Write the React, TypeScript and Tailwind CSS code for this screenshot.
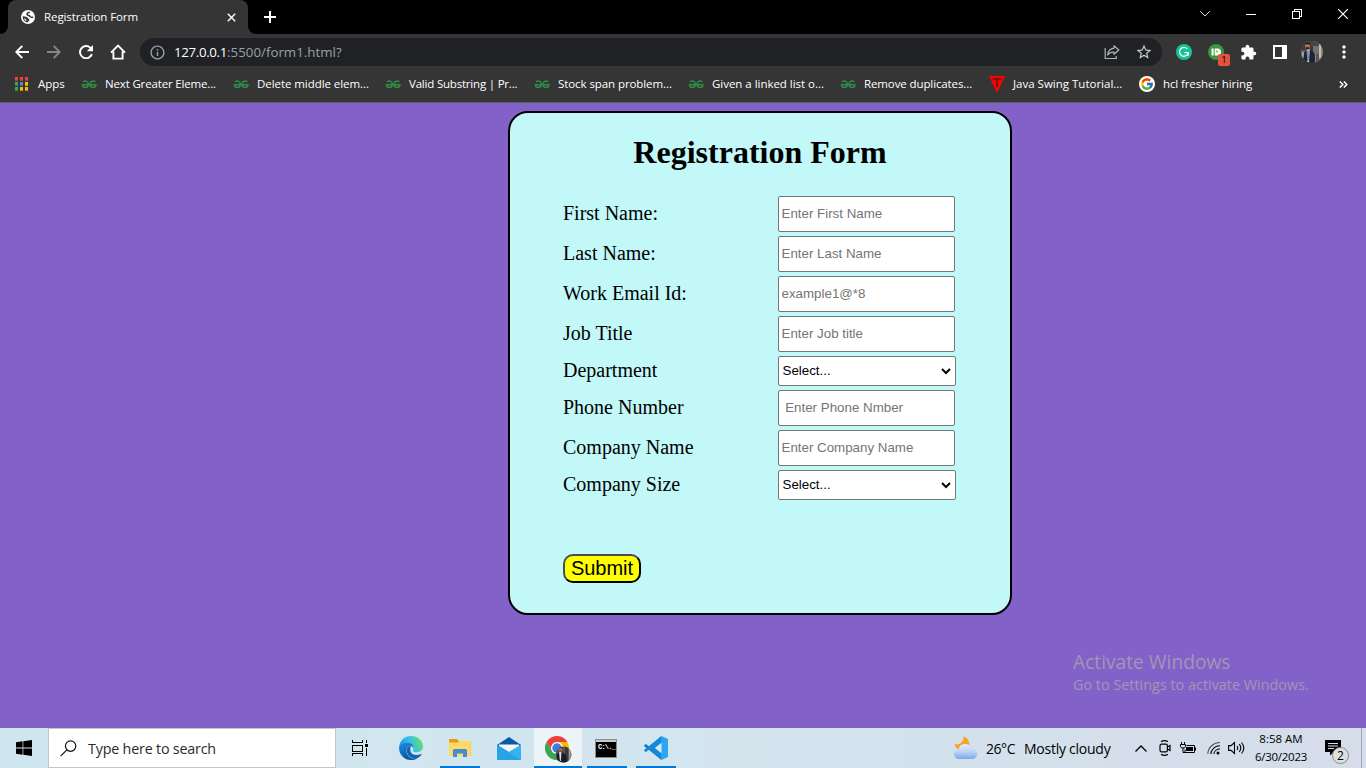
import type { ReactNode } from "react";
import { MdExtension, MdInfoOutline, MdMoreVert, MdStarBorder } from "react-icons/md";
import { FcGoogle } from "react-icons/fc";

/* ---------- Browser icons ---------- */

function GlobeIcon() {
  return (
    <svg width="14" height="14" viewBox="0 0 14 14">
      <circle cx="7" cy="7" r="7" fill="#fff" />
      <path d="M8.800 2.300C6.800 2.600 5.600 3.600 6.300 4.700 7 5.700 8.500 5.300 9 6.500c.5 1 1.900.8 3.200.7" fill="none" stroke="#353535" strokeWidth="1.600" />
      <path d="M1.800 6.300C3.500 6.400 6.800 6.700 7 8.600c1.300.3 1.700 1 1.200 2-.5.900-1.300 1-1.500 1.900C3.600 12.200 1.500 9.500 1.800 6.300zM3 8.300c.3 1.500 1.300 2.600 2.400 3 .2-1.500-.6-1.300-.7-2.300z" fill="#353535" fillRule="evenodd" />
    </svg>
  );
}

function BackIcon() {
  return (
    <svg width="14" height="14" viewBox="0 0 14 14" fill="none" stroke="#fff" strokeWidth="1.900">
      <path d="M14 7H1.500M7.300.8 1.300 7l6 6.200" />
    </svg>
  );
}

function ForwardIcon() {
  return (
    <svg width="14" height="14" viewBox="0 0 14 14" fill="none" stroke="#868686" strokeWidth="1.800">
      <path d="M0 7h12.500M6.700.8l6 6.200-6 6.200" />
    </svg>
  );
}

function ReloadIcon() {
  return (
    <svg width="14" height="14" viewBox="0 0 14 14">
      <path d="M12.900 9.200A6.100 6.100 0 1 1 11.300 2.700L12 3.500" fill="none" stroke="#fff" strokeWidth="2" />
      <path d="M14 0v6.200H7.800z" fill="#fff" />
    </svg>
  );
}

function HomeIcon() {
  return (
    <svg width="16" height="16" viewBox="0 0 16 16" fill="none" stroke="#fff" strokeWidth="1.900">
      <path d="M1 8.600 8 1.500l7 7.100M3.400 7.500V14.600h9.200V7.500" />
    </svg>
  );
}

function AppsIcon() {
  const colors = ["#ea4335", "#ea4335", "#ea4335", "#34a853", "#4285f4", "#fbbc05", "#34a853", "#fbbc05", "#fbbc05"];
  return (
    <svg width="16" height="14" viewBox="-1 0 16 14" shapeRendering="crispEdges">
      {colors.map((c, i) => (
        <g key={i}>
          <rect x={(i % 3) * 5} y={Math.floor(i / 3) * 5} width="3" height="3" fill={c} />
          <rect x={(i % 3) * 5} y={Math.floor(i / 3) * 5 + 3} width="3" height="1" fill={c} opacity="0.700" />
        </g>
      ))}
    </svg>
  );
}

function GfgIcon() {
  return (
    <svg width="16" height="9" viewBox="-.7 0 16 9" fill="none" stroke="#2f8d46" strokeWidth="1.500">
      <path d="M1.300 1.700C4.500.2 6.600 1.500 6.600 4.500 6.600 8.600.9 8.600.8 4.800H14.200C14.100 8.600 8.400 8.600 8.400 4.500 8.400 1.500 10.500.2 13.700 1.700" />
    </svg>
  );
}

function TIcon() {
  return (
    <svg width="16" height="16" viewBox="0 0 16 16">
      <path d="M0 0h16L8.500 16h-1z" fill="#f00" />
      <path d="M4 3h8M8 3v8" stroke="#4c1a17" strokeWidth="1.600" fill="none" />
    </svg>
  );
}

function GoogleDisc() {
  return (
    <span className="flex size-4 items-center justify-center rounded-full bg-white">
      <FcGoogle size={14} />
    </span>
  );
}

function ShareIcon() {
  return (
    <svg width="16" height="16" viewBox="0 0 16 16" fill="none" stroke="#b4b5b7" strokeWidth="1.200">
      <path d="M1.200 4v10.500h11V12" />
      <path d="M10 1.800 14.800 6 10 10.300V8C7.200 8 5.200 8.800 3.600 11 4 7.500 6.200 4.600 10 4.100z" strokeLinejoin="round" />
    </svg>
  );
}

function GrammarlyIcon() {
  return (
    <svg width="16" height="16" viewBox="0 0 16 16">
      <circle cx="8" cy="8" r="8" fill="#15c39a" />
      <path d="M11.200 4.900A4.400 4.400 0 1 0 12.100 9.300M8.500 8.700h3.700v3" fill="none" stroke="#fff" strokeWidth="1.300" />
    </svg>
  );
}

function PushbulletIcon() {
  return (
    <span className="relative block h-4 w-[22px]">
      <svg width="16" height="16" viewBox="0 0 16 16">
        <circle cx="8" cy="8" r="8" fill="#3a963c" />
        <rect x="3.500" y="4.500" width="2.200" height="7" rx=".5" fill="#fff" />
        <path d="M6.700 4.500H9.500a3.500 3.500 0 0 1 0 7H6.700z" fill="#fff" />
        <path d="M8.700 6.400v1.600h1.500" stroke="#3a963c" strokeWidth=".8" fill="none" />
      </svg>
      <span className="absolute top-[10px] left-[10px] flex h-3 w-3 items-center justify-center rounded-[2px] bg-[#e8503f] font-['Open_Sans',sans-serif] text-[9.500px] leading-none text-black">
        1
      </span>
    </span>
  );
}

function SidePanelIcon() {
  return (
    <svg width="14" height="14" viewBox="0 0 14 14" shapeRendering="crispEdges">
      <path d="M0 0h14v14H0zM2 2v10h7V2z" fill="#fff" fillRule="evenodd" />
    </svg>
  );
}

function Avatar() {
  return (
    <svg width="22" height="22" viewBox="0 0 22 22">
      <defs>
        <clipPath id="avatar-disc">
          <circle cx="11" cy="11" r="11" />
        </clipPath>
      </defs>
      <g clipPath="url(#avatar-disc)">
        <rect width="22" height="22" fill="#8a8481" />
        <rect width="12" height="10" fill="#3f3836" />
        <rect y="9" width="5" height="13" fill="#6b615f" />
        <rect x="1" y="11" width="2" height="6" fill="#a99f9a" />
        <rect x="10" width="8" height="5" fill="#4b4644" />
        <rect x="12" y="5" width="6" height="8" fill="#77716e" />
        <rect x="18" y="3" width="2" height="14" fill="#c2bcb8" />
        <rect x="15" y="13" width="3" height="9" fill="#5a5553" />
        <path d="M1.500 22 3.500 11 5.500 8.500h3L11.500 10l2.300 3 .2 9z" fill="#1d2436" />
        <path d="M5.500 8h3.200L8 21H6.500z" fill="#dfe3ec" />
        <path d="M7 9.500v10" stroke="#2c3a62" />
        <ellipse cx="6.500" cy="5" rx="2.600" ry="3.500" fill="#a97257" />
        <path d="M3.500 4.500c0-4 6-4 6 0L8.500 3.200h-4z" fill="#16110f" />
        <path d="M4.500 6.200h4L7.500 8.500h-2z" fill="#32211a" />
      </g>
    </svg>
  );
}

/* ---------- Taskbar icons ---------- */

function WindowsIcon() {
  return (
    <svg width="16" height="16" viewBox="0 0 16 16">
      <path d="M0 2.200 6.600 1.300V7.600H0zM7.300 1.200 16 0v7.600H7.300zM0 8.400h6.600v6.300L0 13.800zM7.300 8.400H16V16l-8.700-1.200z" />
    </svg>
  );
}

function SearchIcon() {
  return (
    <svg width="17" height="17" viewBox="0 0 17 17" fill="none" stroke="#111" strokeWidth="1.200">
      <circle cx="10.600" cy="6.100" r="5.200" />
      <path d="M6.900 9.900.6 16.200" />
    </svg>
  );
}

function TaskViewIcon() {
  return (
    <svg width="17" height="16" viewBox="0 0 17 16" fill="none" stroke="#000" shapeRendering="crispEdges">
      <path d="M.5 0v2.500h10V0M.5 5.500h10v6H.5zM.5 16v-2.500h10V16M14.500 0v3M14.500 8v8" />
      <rect x="13" y="4" width="3" height="3" fill="#000" stroke="none" />
    </svg>
  );
}

function EdgeIcon() {
  return (
    <svg width="24" height="24" viewBox="0 0 24 24">
      <defs>
        <linearGradient id="edge-top" x1="0" y1="0.600" x2="1" y2="0.300">
          <stop offset="0" stopColor="#1f8fe0" />
          <stop offset="0.500" stopColor="#35c1e6" />
          <stop offset="1" stopColor="#6be45a" />
        </linearGradient>
        <linearGradient id="edge-side" x1="0" y1="0" x2="0.400" y2="1">
          <stop offset="0" stopColor="#1c8ede" />
          <stop offset="1" stopColor="#0b54a4" />
        </linearGradient>
      </defs>
      <path d="M.1 11C.8 4.500 5.800 0 12 0c7 0 12 5 12 10.300 0 3.700-2.800 6-6 6-2.600 0-4.300-1-4.300-1.900 0-.6 1-1 1-2.700C14.700 9 12 6.500 8.300 6.500 4 6.500.8 9 .1 11z" fill="url(#edge-top)" />
      <path d="M.1 11C.9 8.500 4 6.500 8.300 6.500c3.700 0 6.400 2.500 6.400 5.200 0 .2 0 .5-.1.700C13.800 10.600 12 10 11 10c-2 0-3.500 2.500-3.500 5 0 5 5 9 10.500 7.500C16.200 23.500 14.200 24 12 24 5 24-.4 18 .1 11z" fill="url(#edge-side)" />
      <path d="M7.800 13.500C7 18 11 22.900 16.500 22.900c2.500-.4 4.700-2.500 5.900-4.200.4-.6 0-1-.5-.7-4 2.100-9.200.8-10.400-2.600C10.800 13.300 12 11 11.500 10c-2 0-3.300 1.700-3.700 3.500z" fill="#1262b5" />
    </svg>
  );
}

function ExplorerIcon() {
  return (
    <svg width="22" height="20" viewBox="0 0 22 20">
      <path d="M0 1.500Q0 1 .6 1H8l1.800 2H21q.8 0 .8.800V18H0z" fill="#e0a010" />
      <path d="M0 4.500h9L10.500 3H21q.8 0 .8.800V18H0z" fill="#ffd766" />
      <path d="M4 19v-6.500Q4 11 5.500 11h11q1.500 0 1.500 1.500V19h-4v-3.500H8V19z" fill="#3e8ed6" />
    </svg>
  );
}

function MailIcon() {
  return (
    <svg width="24" height="23" viewBox="0 0 24 23">
      <path d="M0 8 12 0l12 8v4H0z" fill="#0b5aa8" />
      <path d="M2 7.500h20V15H2z" fill="#f4f6f8" />
      <path d="M0 7.800 12 15 0 23z" fill="#2196e0" />
      <path d="M24 7.800V23L11.500 15.300z" fill="#35b3ee" />
      <path d="M0 23 24 7.800V23z" fill="#35b3ee" />
      <path d="M0 7.800 24 23H0z" fill="#2aa3e6" />
    </svg>
  );
}

function ChromeIcon() {
  return (
    <svg width="27" height="27" viewBox="0 0 27 27">
      <defs>
        <clipPath id="profile-disc">
          <circle cx="18.500" cy="18.500" r="8" />
        </clipPath>
      </defs>
      <path d="M12 12V6h10.400A12 12 0 0 1 12 24z" fill="#fbbc04" />
      <path d="M12 12l5.200 3L12 24A12 12 0 0 1 1.600 6l5.200 9z" fill="#34a853" />
      <path d="M12 6h10.400A12 12 0 0 0 1.600 6l5.200 9z" fill="#ea4335" />
      <circle cx="12" cy="12" r="6" fill="#fff" />
      <circle cx="12" cy="12" r="4.700" fill="#3b7de9" />
      <g clipPath="url(#profile-disc)">
        <rect x="10" y="10" width="17" height="17" fill="#5a5654" />
        <rect x="20" y="10" width="3" height="17" fill="#3c3837" />
        <rect x="24" y="12" width="1.500" height="12" fill="#aaa4a0" />
        <path d="M11.500 27 12 18l2-2h3l4 3 1 8z" fill="#171c2a" />
        <path d="M14 16h2.500l-.6 9h-1z" fill="#d5d9e2" />
        <ellipse cx="15.300" cy="13" rx="1.900" ry="2.600" fill="#9a6a53" />
        <path d="M13 12.500c0-3 4.600-3 4.600 0l-1-1h-2.800z" fill="#16110f" />
      </g>
    </svg>
  );
}

function TerminalIcon() {
  return (
    <span className="mr-[2px] flex h-[19px] w-[22px] flex-col border border-[#8b8b8b] bg-black">
      <span className="h-[2px] bg-[#c9c9c9]" />
      <span className="pt-[2px] pl-[2px] font-['Liberation_Mono',monospace] text-[7px] leading-none font-bold tracking-[-0.800px] text-white">
        C:\._
      </span>
    </span>
  );
}

function VsCodeIcon() {
  return (
    <svg width="24" height="24" viewBox="0 0 24 24">
      <path d="M17.500 0 5.500 11 2.300 8.200Q1.800 7.900 1.300 8.200L.3 9.200q-.5.5 0 1L17.500 24z" fill="#0f7dc8" />
      <path d="M17.500 24 5.500 13 2.300 15.800q-.5.3-1 0L.3 14.800q-.5-.5 0-1L17.500 0v7L11 12l6.500 5z" fill="#1689d6" />
      <path d="M17.300 0 24 3v18l-6.700 3z" fill="#2ba5f2" />
      <path d="M17.500 6.800V17.200L10.800 12z" fill="#d6e9ef" />
    </svg>
  );
}

function WeatherIcon() {
  return (
    <svg width="25" height="24" viewBox="0 0 25 24">
      <defs>
        <linearGradient id="cloud" x1="0" y1="0" x2="0" y2="1">
          <stop offset="0" stopColor="#e4eefc" />
          <stop offset="0.500" stopColor="#bcd4f8" />
          <stop offset="1" stopColor="#7ca8ea" />
        </linearGradient>
      </defs>
      <path d="M9.500 0c4.500 2 7 6 5 11L6 14C3.500 13.500 1 11 .5 8 5 9.500 10.500 6 9.500 0z" fill="#f5a623" />
      <path d="M5 23A4.800 4.800 0 0 1 4.500 13.400 6.500 6.500 0 0 1 17 12.200 5.500 5.500 0 0 1 19 23z" fill="url(#cloud)" />
    </svg>
  );
}

function MeetNowIcon() {
  return (
    <svg width="12" height="16" viewBox="0 0 12 16" fill="none" stroke="#000" strokeWidth="1.200">
      <path d="M2 1.800Q5.500-.4 9 1.800M2 14.200Q5.500 16.400 9 14.200" />
      <rect x="1" y="4.200" width="7.400" height="7.600" rx="1.600" />
      <path d="M8.400 7l2.600-1.500v5L8.400 9" />
    </svg>
  );
}

function BatteryIcon() {
  return (
    <svg width="17" height="12" viewBox="0 0 17 12" fill="none" stroke="#000">
      <path d="M1.500 0v2M4.500 0v2M.5 2.500h5v2q0 1.500-2.500 1.500t-2.500-1.500zM3 6v4.500h2" />
      <path d="M6.500 3.500h8v7H5V7.500" />
      <path d="M6 5h7v4H6z" fill="#000" stroke="none" />
      <path d="M15.500 5.500v3" />
    </svg>
  );
}

function WifiIcon() {
  return (
    <svg width="14" height="14" viewBox="0 0 14 14" fill="none" stroke="#000" strokeWidth="1.100">
      <path d="M.8 13A12 12 0 0 1 13 1.500" stroke="#555" />
      <path d="M3.800 13A9 9 0 0 1 13 4.800M6.800 13A6 6 0 0 1 13 8" />
      <circle cx="11" cy="12" r="1.500" fill="#000" stroke="none" />
    </svg>
  );
}

function VolumeIcon() {
  return (
    <svg width="17" height="14" viewBox="0 0 17 14" fill="none" stroke="#000" strokeWidth="1.100">
      <path d="M.6 4.600H3L6.500 1.500v11L3 9.400H.6z" />
      <path d="M9 5q1.500 2 0 4M11.300 3.200q3 3.800 0 7.600M13.600 1.500q4.400 5.500 0 11" />
    </svg>
  );
}

function NotificationIcon() {
  return (
    <span className="relative block h-[24px] w-[24px]">
      <svg width="16" height="16" viewBox="0 0 16 16">
        <path d="M0 0h16v12H9l-4 3.500V12H0z" />
        <path d="M3 3.500h10M3 6h10M3 8.500h6" stroke="#d5dfeb" />
      </svg>
      <span className="absolute top-[7px] left-[7px] flex size-[17px] items-center justify-center rounded-full border border-[#8a8a8a] bg-[#dedfe1] text-[12px] leading-none text-black">
        2
      </span>
    </span>
  );
}

/* ---------- Browser chrome ---------- */

function TabStrip() {
  return (
    <header className="flex h-[34px] items-stretch bg-black">
      <div className="flex w-2 items-end bg-[#353535]">
        <div className="h-full w-full rounded-br-lg bg-black" />
      </div>
      <div className="flex w-60 items-center rounded-t-lg bg-[#353535] pl-[13px] text-white">
        <GlobeIcon />
        <span className="ml-[9px] flex-1 text-[11.5px] tracking-[-0.09px]">Registration Form</span>
        <svg width="9" height="9" viewBox="0 0 9 9" className="mr-[12px]" stroke="#fff" strokeWidth="1.400">
          <path d="M.8.8l7.400 7.400M8.200.8.8 8.200" />
        </svg>
      </div>
      <div className="flex w-2 items-end bg-[#353535]">
        <div className="h-full w-full rounded-bl-lg bg-black" />
      </div>
      <div className="flex flex-1 items-center bg-black pl-2">
        <svg width="12" height="12" viewBox="0 0 12 12" stroke="#fff" strokeWidth="2" shapeRendering="crispEdges">
          <path d="M6 0v12M0 6h12" />
        </svg>
      </div>
      <div className="flex h-7 items-center bg-black pr-[18px]">
        <svg width="10" height="6" viewBox="0 0 10 6" fill="none" stroke="#ddd" className="mr-[36px]">
          <path d="M.3.3 5 5 9.700.3" />
        </svg>
        <span className="mt-px mr-[36px] h-px w-[10px] bg-white" />
        <svg width="10" height="10" viewBox="0 0 10 10" fill="none" stroke="#fff" className="mr-[36px]" shapeRendering="crispEdges">
          <path d="M.5 2.500h7v7h-7zM2.500 2.500v-2h7v7h-2" />
        </svg>
        <svg width="10" height="10" viewBox="0 0 10 10" stroke="#fff" strokeWidth="1.200">
          <path d="M0 0l10 10M10 0 0 10" />
        </svg>
      </div>
    </header>
  );
}

function Toolbar() {
  return (
    <div className="flex h-9 items-center text-white">
      <div className="flex items-center gap-[18px] pl-[15px]">
        <BackIcon />
        <ForwardIcon />
        <ReloadIcon />
      </div>
      <span className="ml-[17px]"><HomeIcon /></span>
      <div className="ml-[14px] flex h-7 w-[1022px] items-center rounded-full bg-[#202124]">
        <MdInfoOutline size={17} className="ml-[9px] text-[#9aa0a6]" />
        <span className="mt-px ml-[8px] w-[53px] text-[13.3px] tracking-[-0.35px] whitespace-nowrap">127.0.0.1</span>
        <span className="mt-px flex-1 text-[13.3px] tracking-[0.02px] text-[#9aa0a6]">:5500/form1.html?</span>
        <ShareIcon />
        <MdStarBorder size={18} className="mr-[9px] ml-[15px] text-[#c8c9cb]" />
      </div>
      <span className="ml-[14px]"><GrammarlyIcon /></span>
      <span className="ml-4"><PushbulletIcon /></span>
      <MdExtension size={17} className="ml-[10px]" />
      <span className="ml-[16px]"><SidePanelIcon /></span>
      <span className="ml-[14px]"><Avatar /></span>
      <MdMoreVert size={20} className="ml-[11px]" />
    </div>
  );
}

const gfg = <GfgIcon />;

const bookmarks: { label: string; icon: ReactNode; box: string; text: string }[] = [
  { label: "Apps", icon: <AppsIcon />, box: "w-[67px]", text: "tracking-normal" },
  { label: "Next Greater Eleme...", icon: gfg, box: "w-[152px]", text: "tracking-[-0.16px]" },
  { label: "Delete middle elem...", icon: gfg, box: "w-[152px]", text: "tracking-[-0.06px]" },
  { label: "Valid Substring | Pr...", icon: gfg, box: "w-[149px]", text: "tracking-[-0.2px]" },
  { label: "Stock span problem...", icon: gfg, box: "w-[154px]", text: "tracking-[-0.08px]" },
  { label: "Given a linked list o...", icon: gfg, box: "w-[152px]", text: "tracking-[-0.03px]" },
  { label: "Remove duplicates...", icon: gfg, box: "w-[149px]", text: "tracking-[-0.11px]" },
  { label: "Java Swing Tutorial...", icon: <TIcon />, box: "w-[150px]", text: "tracking-normal" },
  { label: "hcl fresher hiring", icon: <GoogleDisc />, box: "w-[130px]", text: "tracking-[-0.11px]" },
];

function BookmarksBar() {
  return (
    <nav className="flex h-[33px] items-center border-b border-[#5f6063] pb-[4px] pl-[14px] text-[11.5px] text-white">
      {bookmarks.map((b) => (
        <div key={b.label} className={`flex shrink-0 items-center gap-2 whitespace-nowrap ${b.box}`}>
          <span className="flex w-4 justify-center">{b.icon}</span>
          <span className={b.text}>{b.label}</span>
        </div>
      ))}
      <svg width="9" height="7" viewBox="0 0 9 7" fill="none" stroke="#fff" strokeWidth="1.500" className="mr-[18px] ml-auto">
        <path d="M.8.5l3 3-3 3M4.800.5l3 3-3 3" />
      </svg>
    </nav>
  );
}

/* ---------- Registration form ---------- */

type Field = { label: string; placeholder?: string };

const fields: Field[] = [
  { label: "First Name:", placeholder: "Enter First Name" },
  { label: "Last Name:", placeholder: "Enter Last Name" },
  { label: "Work Email Id:", placeholder: "example1@*8" },
  { label: "Job Title", placeholder: "Enter Job title" },
  { label: "Department" },
  { label: "Phone Number", placeholder: " Enter Phone Nmber" },
  { label: "Company Name", placeholder: "Enter Company Name" },
  { label: "Company Size" },
];

function SelectBox() {
  return (
    <div className="relative h-[30px] w-[178px]">
      <select className="h-full w-full appearance-none rounded-[2px] border border-[#767676] bg-white pb-px pl-[3.500px] text-[13.333px] text-black">
        <option>Select...</option>
      </select>
      <svg width="10" height="7" viewBox="0 0 10 7" fill="none" stroke="#000" strokeWidth="2" className="absolute top-3 right-[5px]">
        <path d="M1 1l4 4 4-4" />
      </svg>
    </div>
  );
}

function RegistrationForm() {
  return (
    <form className="h-[504px] w-[504px] rounded-[20px] border-2 border-black bg-[#c3f8f8] pt-[21px] pl-[53px] font-['Liberation_Serif',serif] text-black">
      <h1 className="mr-[51px] ml-[-2px] text-center text-[32px] leading-[37px] font-bold">Registration Form</h1>
      <div className="mt-[25px] flex flex-col gap-1">
        {fields.map((f) => (
          <label key={f.label} className="flex items-center">
            <span className="w-[215px] pb-[2px] text-[20px] leading-[23px]">{f.label}</span>
            <span className="block font-['Liberation_Sans',sans-serif]">
              {f.placeholder ? (
                <input
                  type="text"
                  placeholder={f.placeholder}
                  className="block h-9 w-[177px] rounded-[2px] border border-[#767676] bg-white px-[2.500px] pb-px text-[13.333px] placeholder:text-[#757575]"
                />
              ) : (
                <SelectBox />
              )}
            </span>
          </label>
        ))}
      </div>
      <button
        type="button"
        className="mt-[54px] block h-[29px] w-[78px] rounded-[10px] border-2 border-t-[#4c4c4c] border-r-black border-b-black border-l-[#4c4c4c] bg-[#ff0] pb-px font-['Liberation_Sans',sans-serif] text-[20px] leading-[23px]"
      >
        Submit
      </button>
    </form>
  );
}

/* ---------- Taskbar ---------- */

function TaskButton({ children, bar, active }: { children: ReactNode; bar: string; active?: boolean }) {
  return (
    <div className={`flex h-10 w-12 flex-col items-center pt-[2px] ${active ? "bg-[#ecf4f8]" : ""}`}>
      <div className="flex flex-1 items-center">{children}</div>
      <div className={`h-[2px] ${bar}`} />
    </div>
  );
}

function Taskbar() {
  return (
    <footer className="flex h-10 items-center bg-linear-to-r from-[#cee7ef] via-[#d3e5ee] to-[#d5dcea] text-black">
      <div className="flex w-12 justify-center">
        <WindowsIcon />
      </div>
      <div className="flex h-10 w-72 items-center border border-[#c4c4c4] bg-white pl-[11px]">
        <SearchIcon />
        <span className="mt-px ml-[11px] text-[14.300px] tracking-[-0.19px] text-[#2b2b2b]">Type here to search</span>
      </div>
      <div className="flex w-12 justify-center">
        <TaskViewIcon />
      </div>
      <div className="ml-[3px] flex gap-px">
        <TaskButton bar="w-0"><EdgeIcon /></TaskButton>
        <TaskButton bar="w-10 bg-[#0078d7]"><ExplorerIcon /></TaskButton>
        <TaskButton bar="w-0"><MailIcon /></TaskButton>
        <TaskButton bar="w-12 bg-[#0078d7]" active><span className="ml-px pt-[2px]"><ChromeIcon /></span></TaskButton>
        <TaskButton bar="w-10 bg-[#0078d7]"><TerminalIcon /></TaskButton>
        <TaskButton bar="w-10 bg-[#0078d7]"><VsCodeIcon /></TaskButton>
      </div>
      <div className="ml-auto flex h-10 items-center">
        <WeatherIcon />
        <span className="ml-[7px] w-[38px] text-[14px] tracking-[-0.450px]">26°C</span>
        <span className="w-[111px] text-[14px] tracking-[-0.250px]">Mostly cloudy</span>
        <svg width="12" height="7" viewBox="0 0 12 7" fill="none" stroke="#000" strokeWidth="1.300">
          <path d="M.5 6.500 6 1l5.500 5.500" />
        </svg>
        <span className="ml-[12px]"><MeetNowIcon /></span>
        <span className="ml-[9px]"><BatteryIcon /></span>
        <span className="ml-[10px]"><WifiIcon /></span>
        <span className="ml-[7px]"><VolumeIcon /></span>
        <div className="mb-px ml-[9px] flex w-[54px] flex-col items-center text-[11.5px] leading-[18px] whitespace-nowrap">
          <span>8:58 AM</span>
          <span className="tracking-[-0.270px]">6/30/2023</span>
        </div>
        <span className="mt-2 ml-[17px]"><NotificationIcon /></span>
        <span className="ml-[12px] h-10 w-[5px] border-l border-[#9fa8b3]" />
      </div>
    </footer>
  );
}

export default function App() {
  return (
    <div className="flex h-[768px] w-[1366px] flex-col overflow-hidden bg-[#353535] font-['Open_Sans',sans-serif]">
      <TabStrip />
      <Toolbar />
      <BookmarksBar />
      <main className="relative flex flex-1 justify-center bg-[#8262c8] pt-2 pl-[154px]">
        <RegistrationForm />
        <div className="absolute right-[57px] bottom-[33px] w-[236px] whitespace-nowrap text-[#a196b4]">
          <div className="text-[19.200px] leading-[24px]">Activate Windows</div>
          <div className="pt-px text-[14.400px] leading-[20px]">Go to Settings to activate Windows.</div>
        </div>
      </main>
      <Taskbar />
    </div>
  );
}
